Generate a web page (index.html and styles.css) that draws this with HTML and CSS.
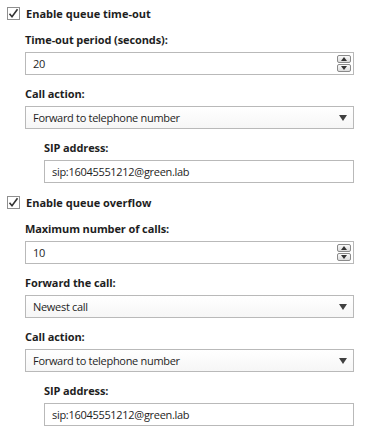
FILE: index.html
```html
<!DOCTYPE html>
<html lang="en">
<head>
  <meta charset="UTF-8">
  <title>Queue settings</title>
  <link rel="stylesheet" href="styles.css">
</head>
<body>

  <!-- queue time-out -->
  <div class="section">
    <label class="check-row"><span class="checkbox"><svg viewBox="0 0 13 13" width="13" height="13"><path d="M2.5 6.8 L5 9.8 L10.5 2.2" fill="none" stroke="#333" stroke-width="1.6"/></svg></span>Enable queue time-out</label>
    <div class="group">
      <div class="label">Time-out period (seconds):</div>
      <div class="field">20<span class="spinner"><span class="spin-btn up"></span><span class="spin-btn down"></span></span></div>
      <div class="label">Call action:</div>
      <div class="field select">Forward to telephone number<span class="arrow"></span></div>
      <div class="group">
        <div class="label">SIP address:</div>
        <div class="field text">sip:16045551212@green.lab</div>
      </div>
    </div>
  </div>

  <!-- queue overflow -->
  <div class="section">
    <label class="check-row"><span class="checkbox"><svg viewBox="0 0 13 13" width="13" height="13"><path d="M2.5 6.8 L5 9.8 L10.5 2.2" fill="none" stroke="#333" stroke-width="1.6"/></svg></span>Enable queue overflow</label>
    <div class="group">
      <div class="label">Maximum number of calls:</div>
      <div class="field">10<span class="spinner"><span class="spin-btn up"></span><span class="spin-btn down"></span></span></div>
      <div class="label">Forward the call:</div>
      <div class="field select">Newest call<span class="arrow"></span></div>
      <div class="label">Call action:</div>
      <div class="field select">Forward to telephone number<span class="arrow"></span></div>
      <div class="group">
        <div class="label">SIP address:</div>
        <div class="field text">sip:16045551212@green.lab</div>
      </div>
    </div>
  </div>

</body>
</html>
```

FILE: styles.css
```css
body {
  margin: 0;
  padding: 5px 0 0 7px;
  font-family: "Open Sans", "Noto Sans", sans-serif;
  font-size: 11px;
  color: #1e1e1e;
  background: #fff;
}
.section {
  margin-bottom: 11px;
}
.check-row {
  display: flex;
  align-items: center;
  gap: 6px;
  height: 16px;
  font-weight: bold;
}
.checkbox {
  width: 13px;
  height: 13px;
  box-sizing: border-box;
  border: 1px solid #8f8f8f;
  background: #fff;
  display: flex;
}
.checkbox svg {
  margin: -1px;
}
.group {
  padding-left: 18px;
  width: 329px;
  box-sizing: content-box;
}
.group .group {
  width: 310px;
  padding-left: 19px;
}
.section > .group {
  padding-top: 11px;
}
.label {
  font-weight: bold;
  line-height: 16px;
  margin-bottom: 4px;
  letter-spacing: -0.1px;
}
.field {
  position: relative;
  height: 23px;
  box-sizing: border-box;
  border: 1px solid #b9b9b9;
  padding: 0 7px;
  line-height: 21px;
  margin-bottom: 11px;
  background: #fff;
  letter-spacing: -0.3px;
}
.group .group .field {
  margin-bottom: 0;
}
.select {
  background: linear-gradient(#fff, #f6f6f6);
}
.arrow {
  position: absolute;
  right: 6px;
  top: 8px;
  border-left: 4.5px solid transparent;
  border-right: 4.5px solid transparent;
  border-top: 6px solid #404040;
}
.spinner {
  position: absolute;
  right: 2px;
  top: 2px;
  display: flex;
  flex-direction: column;
  gap: 1px;
}
.spin-btn {
  position: relative;
  width: 14px;
  height: 8px;
  box-sizing: border-box;
  border: 1px solid #8a8a8a;
  border-radius: 2px;
  background: linear-gradient(#fafafa, #dcdcdc);
}
.spin-btn::after {
  content: "";
  position: absolute;
  left: 3px;
  border-left: 3px solid transparent;
  border-right: 3px solid transparent;
}
.up::after {
  top: 1px;
  border-bottom: 4px solid #333;
}
.down::after {
  top: 1px;
  border-top: 4px solid #333;
}
```
